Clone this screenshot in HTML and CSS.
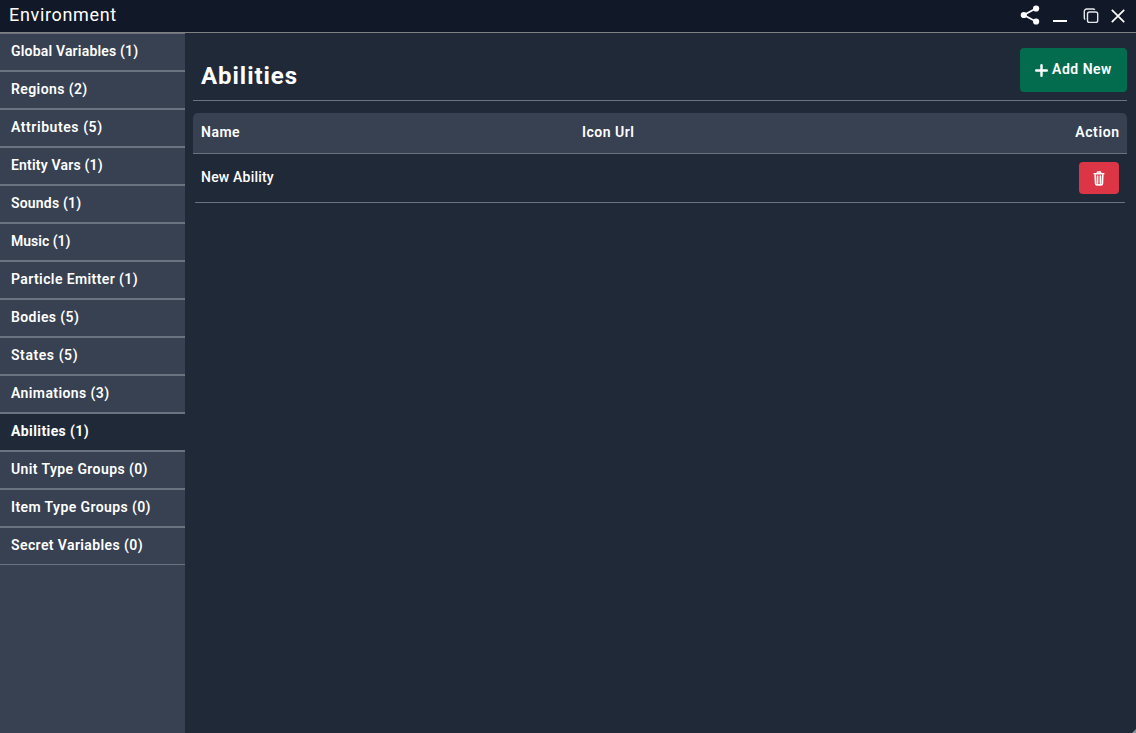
FILE: index.html
```html
<!DOCTYPE html>
<html lang="en">
<head>
<meta charset="utf-8">
<title>Environment</title>
<link rel="stylesheet" href="styles.css">
</head>
<body>
<div class="window">
  <header class="titlebar">
    <h1 class="title">Environment</h1>
    <div class="controls">
      <svg class="share" width="20" height="20" viewBox="0 0 20 20"><path d="M16.3 3.2 3.8 10l12.5 6.8" fill="none" stroke="#fff" stroke-width="1.8"/><circle cx="16.1" cy="3.5" r="3.1" fill="#fff"/><circle cx="3.8" cy="10" r="3.1" fill="#fff"/><circle cx="16.1" cy="16.5" r="3.1" fill="#fff"/></svg>
      <svg class="minimize" width="14" height="20" viewBox="0 0 14 20"><path d="M0 15h14v2H0z" fill="#fff"/></svg>
      <svg class="restore" width="16" height="16" viewBox="0 0 16 16" fill="none" stroke="#e5e7eb" stroke-width="1.4"><rect x="4.5" y="4" width="10.2" height="10.4" rx="2"/><path d="M2.2 11.5A2 2 0 0 1 1.3 10V3.4A2.4 2.4 0 0 1 3.7 1H10a2 2 0 0 1 1.8.9"/></svg>
      <svg class="close" width="14" height="14" viewBox="0 0 14 14"><path d="m.8.8 12.4 12.4M13.2.8.8 13.2" stroke="#fff" stroke-width="1.7"/></svg>
    </div>
  </header>
  <div class="body">
    <nav class="sidebar">
      <a class="tab snug">Global Variables (1)</a>
      <a class="tab">Regions (2)</a>
      <a class="tab loose">Attributes (5)</a>
      <a class="tab snug">Entity Vars (1)</a>
      <a class="tab snug">Sounds (1)</a>
      <a class="tab tight">Music (1)</a>
      <a class="tab">Particle Emitter (1)</a>
      <a class="tab">Bodies (5)</a>
      <a class="tab loose">States (5)</a>
      <a class="tab">Animations (3)</a>
      <a class="tab active">Abilities (1)</a>
      <a class="tab">Unit Type Groups (0)</a>
      <a class="tab">Item Type Groups (0)</a>
      <a class="tab">Secret Variables (0)</a>
    </nav>
    <main class="content">
      <div class="heading">
        <h2 class="heading-text">Abilities</h2>
        <button class="add"><svg width="13" height="13" viewBox="0 0 13 13"><path d="M6.5 1.2v10.6M1.2 6.5h10.6" stroke="#fff" stroke-width="2.4" stroke-linecap="round"/></svg><span>Add New</span></button>
      </div>
      <div class="table-head">
        <span class="name">Name</span><span class="icon-url">Icon Url</span><span class="action">Action</span>
      </div>
      <div class="row">
        <span class="row-name">New Ability</span>
        <button class="delete"><svg width="12" height="15" viewBox="0 0 12 15"><path d="M1.2 2.8h9.6M4 2.5l.7-1.5h2.6L8 2.5M2.2 4.2l.4 8.4q.1 1.3 1.4 1.3h4q1.3 0 1.4-1.3l.4-8.4M4.6 5v7.2M7.4 5v7.2" fill="none" stroke="#fff" stroke-width="1.6" stroke-linecap="round"/></svg></button>
      </div>
    </main>
  </div>
  <svg class="grip" width="4" height="4" viewBox="0 0 4 4"><path d="M0 4 4 0v4z" fill="#8b929c"/></svg>
</div>
</body>
</html>
```
FILE: styles.css
```css
* { box-sizing: border-box; }
body { margin: 0; font-family: Roboto, "Liberation Sans", sans-serif; color: #fff; }
h1, h2 { margin: 0; }
button { border: 0; color: inherit; font: inherit; padding: 0; }
svg { display: block; }
.window { position: relative; width: 1136px; height: 733px; display: flex; flex-direction: column; background: #1f2937; overflow: hidden; }
.titlebar { height: 33px; flex: none; display: flex; justify-content: space-between; background: #111827; border-bottom: 1px solid #808080; padding: 0 11px 0 9px; }
.title { font-size: 18px; font-weight: 400; line-height: 30px; letter-spacing: 0.67px; }
.controls { display: flex; }
.share { margin: 5px 13px 0 0; }
.minimize { margin: 5px 16px 0 0; }
.restore { margin: 8px 12px 0 0; }
.close { margin-top: 9px; }
.body { flex: 1; display: flex; }
.sidebar { width: 185px; background: #374151; }
.tab { display: block; height: 38px; padding-left: 11px; border: solid #6b7280; border-width: 1px 0; font-size: 14px; font-weight: 600; line-height: 35px; letter-spacing: 0.4px; white-space: nowrap; }
.snug { letter-spacing: 0.19px; }
.tight { letter-spacing: 0; }
.loose { letter-spacing: 0.57px; }
.active { background: #1f2937; font-weight: 700; }
.content { flex: 1; padding: 15px 9px 0 8px; }
.heading { height: 53px; display: flex; justify-content: space-between; border-bottom: 1px solid #6b7280; padding-left: 8px; }
.heading-text { font-size: 24px; font-weight: 700; line-height: 56px; letter-spacing: 0.95px; }
.add { width: 107px; height: 44px; display: flex; align-items: center; justify-content: center; gap: 4px; background: #046c4e; border-radius: 4px; font-size: 14px; font-weight: 600; line-height: 42px; letter-spacing: 0.5px; }
.add span { height: 44px; }
.table-head { height: 41px; margin-top: 12px; display: flex; padding: 0 8px; background: #374151; border-bottom: 1px solid #6b7280; border-radius: 5px 5px 0 0; font-size: 14px; font-weight: 600; line-height: 39px; letter-spacing: 0.5px; }
.name { width: 381px; }
.icon-url { flex: 1; }
.action { letter-spacing: 0.6px; margin-right: -0.6px; }
.row { height: 49px; margin: 0 2px; padding: 8px 6px; display: flex; justify-content: space-between; border-bottom: 1px solid #6b7280; font-size: 14px; font-weight: 500; line-height: 31px; letter-spacing: 0.2px; }
.delete { width: 40px; height: 32px; display: flex; align-items: center; justify-content: center; background: #dc3545; border-radius: 4px; }
.grip { position: absolute; right: 0; bottom: 0; }
```
